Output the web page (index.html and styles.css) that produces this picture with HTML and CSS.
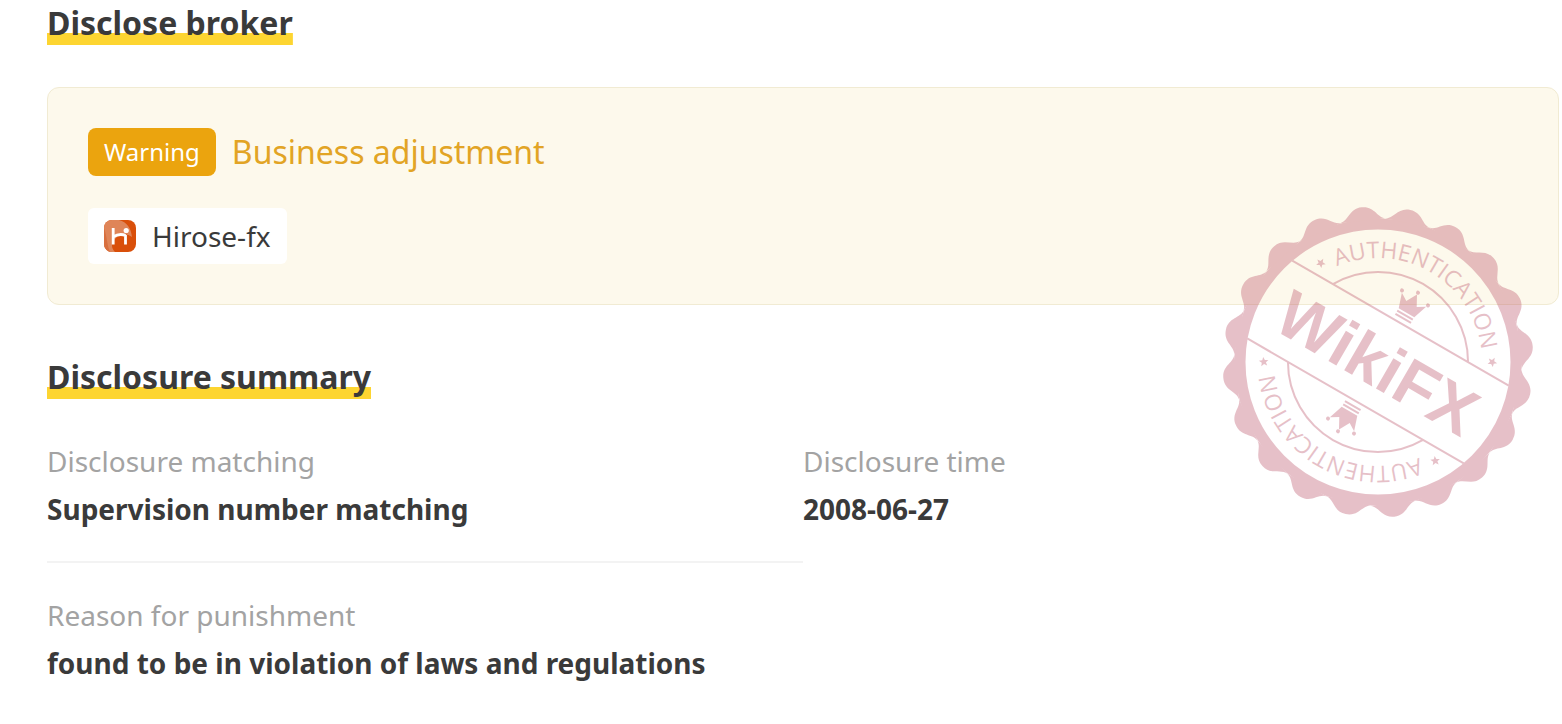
FILE: index.html
```html
<!DOCTYPE html>
<html lang="en">
<head>
<meta charset="utf-8">
<title>Disclosure</title>
<link rel="stylesheet" href="styles.css">
</head>
<body>
<main class="page">
  <section class="section">
    <h2 class="title">Disclose broker</h2>
    <div class="card">
      <div class="status">
        <span class="tag">Warning</span>
        <span class="status-text">Business adjustment</span>
      </div>
      <a class="broker" href="#">
        <svg class="broker-logo" viewBox="0 0 32 32" aria-hidden="true">
          <defs><clipPath id="logo-clip"><rect width="32" height="32" rx="8"/></clipPath></defs>
          <g clip-path="url(#logo-clip)">
            <rect width="32" height="32" fill="#d94f0a"/>
            <path d="M0 0H15C23 2 27 8 28 17C23 13 15 14 11 19C7 23 7 28 11 32H0Z" fill="#df8558"/>
            <path d="M0 8C3 16 3 25 6 32H0Z" fill="#d86f3e"/>
          </g>
          <path d="M9.200 8V24.500M21.500 15V24.500M9 17C13 14.500 18 14 21.500 15.500" fill="none" stroke="#fff" stroke-width="2.800"/>
          <circle cx="22.200" cy="10.500" r="2.600" fill="#fff"/>
        </svg>
        <span>Hirose-fx</span>
      </a>
    </div>
  </section>

  <section class="section section-summary">
    <h2 class="title">Disclosure summary</h2>
    <dl class="facts">
      <div class="fact fact-ruled">
        <dt>Disclosure matching</dt>
        <dd>Supervision number matching</dd>
      </div>
      <div class="fact">
        <dt>Disclosure time</dt>
        <dd>2008-06-27</dd>
      </div>
      <div class="fact">
        <dt>Reason for punishment</dt>
        <dd>found to be in violation of laws and regulations</dd>
      </div>
    </dl>
  </section>

  <svg class="stamp" viewBox="-156 -156 312 312" role="img" aria-label="WikiFX authentication stamp">
    <defs>
      <path id="lobe" d="M-23-142C-14-143.500-13-155.500 0-155.500C13-155.500 14-143.500 23-142Z"/>
      <path id="text-arc" d="M-104 0A104 104 0 0 1 104 0"/>
      <path id="star" d="M0-5L1.300-1.700L4.800-1.500L2.100.7L3 4L0 2.200L-3 4L-2.100.7L-4.800-1.500L-1.300-1.700Z"/>
      <g id="half">
        <path class="stamp-line" d="M-125-45H125M-78-45A90 90 0 0 1 78-45"/>
        <text class="stamp-arc-text"><textPath href="#text-arc" startOffset="50%">AUTHENTICATION</textPath></text>
        <use href="#star" x="-99" y="-57"/>
        <use href="#star" x="99" y="-57"/>
        <path d="M-9-57L-14-72L-6-67L0-78L6-67L14-72L9-57Z"/>
        <circle cx="-15" cy="-74" r="2"/><circle cx="0" cy="-80" r="2"/><circle cx="15" cy="-74" r="2"/>
        <path class="stamp-line" d="M-9-54H9M-9-50.500H9"/>
      </g>
    </defs>
    <g class="stamp-ink">
      <circle class="stamp-ring" r="138"/>
      <g transform="rotate(-6)">
        <use href="#lobe"/>
        <use href="#lobe" transform="rotate(18)"/>
        <use href="#lobe" transform="rotate(36)"/>
        <use href="#lobe" transform="rotate(54)"/>
        <use href="#lobe" transform="rotate(72)"/>
        <use href="#lobe" transform="rotate(90)"/>
        <use href="#lobe" transform="rotate(108)"/>
        <use href="#lobe" transform="rotate(126)"/>
        <use href="#lobe" transform="rotate(144)"/>
        <use href="#lobe" transform="rotate(162)"/>
        <use href="#lobe" transform="rotate(180)"/>
        <use href="#lobe" transform="rotate(198)"/>
        <use href="#lobe" transform="rotate(216)"/>
        <use href="#lobe" transform="rotate(234)"/>
        <use href="#lobe" transform="rotate(252)"/>
        <use href="#lobe" transform="rotate(270)"/>
        <use href="#lobe" transform="rotate(288)"/>
        <use href="#lobe" transform="rotate(306)"/>
        <use href="#lobe" transform="rotate(324)"/>
        <use href="#lobe" transform="rotate(342)"/>
      </g>
      <g transform="rotate(30)">
        <use href="#half"/>
        <use href="#half" transform="rotate(180)"/>
        <text class="stamp-name" x="0" y="24">WikiFX</text>
      </g>
    </g>
  </svg>
</main>
</body>
</html>
```
FILE: styles.css
```css
* { box-sizing: border-box; }

body {
  margin: 0;
  background: #fff;
  color: #3a3a3a;
  font-family: "Noto Sans", "Open Sans", sans-serif;
  font-size: 28px;
  line-height: 48px;
}

.page {
  position: relative;
  padding: 0 3px 32px 47px;
}

.title {
  width: fit-content;
  margin: 0 0 42px;
  font-size: 32px;
  font-weight: 700;
  line-height: 45px;
  background: linear-gradient(#fdd531, #fdd531) bottom / 100% 12px no-repeat;
}

.section-summary { margin-top: 49px; }

.section-summary .title { margin-bottom: 38px; }

.card {
  padding: 40px;
  border: 1px solid #f1ebd3;
  border-radius: 12px;
  background: #fdf9ec;
}

.status {
  display: flex;
  align-items: center;
  gap: 16px;
  margin-bottom: 32px;
}

.tag {
  padding: 0 16px;
  border-radius: 8px;
  background: #eba40e;
  color: #fff;
  font-size: 24px;
}

.status-text {
  color: #e2a425;
  font-size: 32px;
}

.broker {
  display: flex;
  align-items: center;
  gap: 16px;
  width: fit-content;
  padding: 4px 16px;
  border-radius: 6px;
  background: #fff;
  color: #3a3a3a;
  text-decoration: none;
}

.broker-logo { width: 32px; height: 32px; }

.facts {
  display: grid;
  grid-template-columns: 1fr 1fr;
  row-gap: 28px;
  margin: 0;
}

.fact-ruled {
  padding-bottom: 28px;
  border-bottom: 2px solid #f3f3f3;
}

.fact dt { color: #a3a3a3; }

.fact dd { margin: 0; font-weight: 700; }

.stamp {
  position: absolute;
  top: 206px;
  right: 28px;
  width: 312px;
  height: 312px;
  pointer-events: none;
}

.stamp-ink { fill: #b43f58; opacity: 0.32; }

.stamp-ring { fill: none; stroke: #b43f58; stroke-width: 11px; }

.stamp-line { fill: none; stroke: #b43f58; stroke-width: 2px; }

.stamp-arc-text {
  font-family: "Open Sans", "Noto Sans", sans-serif;
  font-size: 23px;
  font-weight: 500;
  text-anchor: middle;
}

.stamp-name {
  font-family: "Liberation Sans", Arial, sans-serif;
  font-size: 66px;
  font-weight: 700;
  text-anchor: middle;
}
```
